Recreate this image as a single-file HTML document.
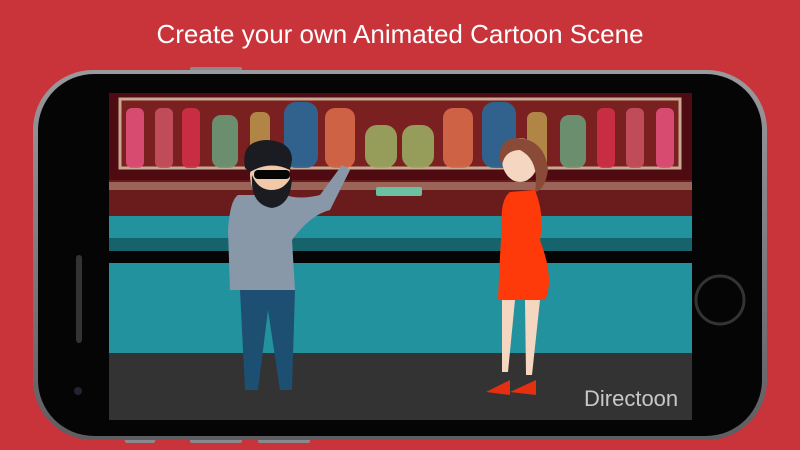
<!DOCTYPE html><html><head><style>
html,body{margin:0;padding:0;width:800px;height:450px;overflow:hidden;background:#c9343a;font-family:"Liberation Sans",sans-serif}
h1{position:absolute;top:19px;left:0;width:800px;text-align:center;margin:0;color:#fff;font-weight:normal;font-size:26px}
</style></head><body>
<h1>Create your own Animated Cartoon Scene</h1>
<svg width="800" height="450" style="position:absolute;left:0;top:0">
<defs><linearGradient id="bez" x1="0" y1="0" x2="0" y2="1"><stop offset="0" stop-color="#9a9a9e"/><stop offset="1" stop-color="#5d5d62"/></linearGradient></defs>
<rect x="190" y="67" width="52" height="6" rx="2" fill="#8a8a8e"/>
<rect x="125" y="437" width="30" height="6" rx="2" fill="#8a8a8e"/>
<rect x="190" y="437" width="52" height="6" rx="2" fill="#8a8a8e"/>
<rect x="258" y="437" width="52" height="6" rx="2" fill="#8a8a8e"/>
<rect x="33" y="70" width="734" height="370" rx="60" fill="url(#bez)"/>
<rect x="38" y="74" width="724" height="362" rx="56" fill="#050505"/>
<rect x="76" y="255" width="6" height="88" rx="3" fill="#333"/>
<circle cx="78" cy="391" r="4" fill="#223"/>
<circle cx="720" cy="300" r="24" fill="none" stroke="#333" stroke-width="3"/>
<rect x="109" y="93" width="583" height="327" fill="#4e0c12"/>
<rect x="120" y="99" width="560" height="69" fill="#7a2020" stroke="#c8a890" stroke-width="3"/>
<g opacity="0.9">
<rect x="126" y="108" width="18" height="60" rx="6" fill="#e2507a"/>
<rect x="155" y="108" width="18" height="60" rx="6" fill="#c85060"/>
<rect x="182" y="108" width="18" height="60" rx="6" fill="#d03048"/>
<rect x="212" y="115" width="26" height="53" rx="9" fill="#6a9a78"/>
<rect x="250" y="112" width="20" height="56" rx="7" fill="#b8904a"/>
<rect x="284" y="102" width="34" height="66" rx="12" fill="#2a6a9a"/>
<rect x="325" y="108" width="30" height="60" rx="10" fill="#d86a48"/>
<rect x="365" y="125" width="32" height="43" rx="12" fill="#9aaa60"/>
<rect x="402" y="125" width="32" height="43" rx="12" fill="#9aaa60"/>
<rect x="443" y="108" width="30" height="60" rx="10" fill="#d86a48"/>
<rect x="482" y="102" width="34" height="66" rx="12" fill="#2a6a9a"/>
<rect x="527" y="112" width="20" height="56" rx="7" fill="#b8904a"/>
<rect x="560" y="115" width="26" height="53" rx="9" fill="#6a9a78"/>
<rect x="597" y="108" width="18" height="60" rx="6" fill="#d03048"/>
<rect x="626" y="108" width="18" height="60" rx="6" fill="#c85060"/>
<rect x="656" y="108" width="18" height="60" rx="6" fill="#e2507a"/>
</g>
<rect x="109" y="180" width="583" height="36" fill="#6a1c1c"/>
<rect x="109" y="182" width="583" height="8" fill="#9a6458"/>
<rect x="376" y="187" width="46" height="9" rx="2" fill="#6ac0a0"/>
<rect x="109" y="216" width="583" height="22" fill="#22929e"/>
<rect x="109" y="238" width="583" height="13" fill="#16636c"/>
<rect x="109" y="251" width="583" height="12" fill="#050505"/>
<rect x="109" y="263" width="583" height="90" fill="#22929e"/>
<rect x="109" y="353" width="583" height="67" fill="#333333"/>
<path d="M238 195 Q230 200 228 230 L230 290 L295 290 L292 240 Q310 215 330 210 L350 170 L342 165 L320 195 Q300 200 285 195 Z" fill="#8898a8"/>
<path d="M240 290 L295 290 L292 390 L280 390 L268 310 L258 390 L245 390 Z" fill="#1d4f72"/>
<ellipse cx="270" cy="175" rx="20" ry="26" fill="#f2c9a8"/>
<path d="M252 175 Q250 205 272 208 Q292 205 292 175 Q285 190 272 190 Q258 190 252 175Z" fill="#1b1b22"/>
<path d="M245 168 Q240 140 268 140 Q292 142 292 160 L290 170 Q270 160 250 172Z" fill="#1b1b22"/>
<rect x="254" y="170" width="36" height="9" rx="4" fill="#050505"/>
<ellipse cx="520" cy="160" rx="18" ry="22" fill="#f5d6c0"/>
<path d="M500 160 Q498 138 518 138 Q545 140 548 170 Q545 190 535 192 Q540 160 520 150 Q505 150 502 165Z" fill="#8a4a38"/>
<path d="M510 192 L535 190 Q545 215 540 240 Q555 280 545 300 L498 300 Q500 250 502 225 Q500 200 510 192Z" fill="#ff3a0a"/>
<path d="M502 300 L515 300 L508 372 L502 372Z M525 300 L540 300 L532 375 L526 375Z" fill="#f5d6c0"/>
<path d="M486 392 L510 380 L510 395 Z M510 392 L536 380 L536 395Z" fill="#e43010"/>
</svg>
<div style="position:absolute;left:584px;top:386px;color:#c8c8c8;font-size:22px">Directoon</div>
</body></html>
